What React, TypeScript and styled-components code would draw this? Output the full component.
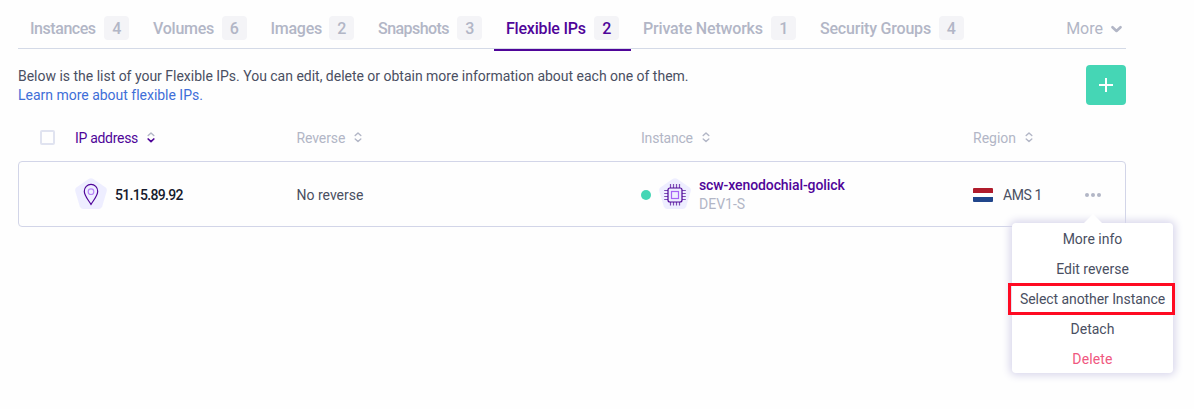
import React from "react";
import styled, { createGlobalStyle } from "styled-components";

const color = {
  purple: "#4f0599",
  grey: "#b2b6c6",
  text: "#4a4f62",
  line: "#d2d5e8",
  badge: "#f4f4f7",
  green: "#45d6b5",
  lilac: "#eeeeff",
};

const GlobalStyle = createGlobalStyle`
  * { box-sizing: border-box; }
  body {
    margin: 0;
    background: #fefefe;
    color: ${color.text};
    font: 400 14px/19px Roboto, sans-serif;
    white-space: nowrap;
  }
`;

const Page = styled.main`
  width: 1194px;
  height: 409px;
  padding: 8px 68px 0 18px;
  overflow: hidden;
`;

const TabBar = styled.nav`
  display: flex;
  height: 41px;
  border-bottom: 1px solid #d4dae7;
  font-size: 16px;
  font-weight: 500;
  color: ${color.grey};
`;

const Tab = styled.div<{ $width: number; $active?: boolean }>`
  display: flex;
  align-items: center;
  justify-content: space-between;
  width: ${(p) => p.$width}px;
  height: ${(p) => (p.$active ? 43 : 41)}px;
  padding: 0 12px 1px;
  color: ${(p) => (p.$active ? color.purple : "inherit")};
  border-bottom: ${(p) => (p.$active ? `2px solid ${color.purple}` : "0")};
`;

const Label = styled.span<{ $spacing?: number }>`
  letter-spacing: ${(p) => p.$spacing ?? 0}px;
`;

const Count = styled.span`
  width: 24.6px;
  height: 24px;
  border-radius: 4px;
  background: ${color.badge};
  line-height: 25px;
  text-align: center;
`;

const More = styled.div`
  display: flex;
  align-items: center;
  gap: 8px;
  margin-left: auto;
  padding: 1px 4px 0 0;
  font-weight: 400;
`;

const Intro = styled.section`
  display: flex;
  justify-content: space-between;
  height: 56px;
  padding-top: 16px;
`;

const IntroText = styled.p`
  margin: 2px 0 0;
  letter-spacing: -0.014px;
`;

const Link = styled.a`
  display: block;
  color: #3f6ed8;
`;

const AddButton = styled.button`
  display: grid;
  place-items: center;
  width: 40px;
  height: 40px;
  padding: 0;
  border: 0;
  border-radius: 4px;
  background: ${color.green};
`;

const Columns = styled.div`
  display: grid;
  grid-template-columns: 57px 221.5px 344.5px 332px 1fr;
  align-items: center;
`;

const HeadRow = styled(Columns)`
  height: 56px;
  padding-top: 10px;
`;

const HeadCell = styled.div<{ $active?: boolean }>`
  display: flex;
  align-items: center;
  gap: 9px;
  color: ${(p) => (p.$active ? color.purple : color.grey)};
`;

const Checkbox = styled.span`
  width: 15px;
  height: 15px;
  margin: -2px 0 0 21.6px;
  border: 2px solid #e0e3f0;
  border-radius: 2px;
`;

const Row = styled(Columns)`
  position: relative;
  height: 66px;
  border: 1px solid ${color.line};
  border-radius: 4px;
  grid-template-columns: 56px 221.5px 344.5px 332px 1fr;
`;

const Cell = styled.div`
  display: flex;
  align-items: center;
  line-height: 20px;
`;

const Address = styled.span`
  margin: 2px 0 0 8px;
  color: #151a2d;
  font-weight: 500;
  letter-spacing: -0.68px;
`;

const Reverse = styled.span`
  margin-top: 2px;
`;

const Status = styled.i`
  width: 10px;
  height: 10px;
  margin: 1px 8px 0 0;
  border-radius: 50%;
  background: ${color.green};
`;

const Server = styled.div`
  margin: 2px 0 0 8px;
  line-height: 19px;
  color: ${color.grey};
`;

const ServerName = styled.div`
  color: ${color.purple};
  font-weight: 500;
  letter-spacing: -0.1px;
`;

const Flag = styled.span`
  width: 20px;
  height: 14px;
  margin: 1px 10px 0 0;
  border-radius: 1px;
  background: linear-gradient(#b01c2c 0 4.6px, #fff 4.6px 9.4px, #21468b 9.4px);
`;

const Zone = styled.span`
  width: 38px;
  margin-top: 2px;
  letter-spacing: -0.4px;
`;

const Dots = styled.div`
  display: flex;
  gap: 2px;
  margin: 1px 0 0 44px;
`;

const Dot = styled.i`
  width: 4px;
  height: 4px;
  border-radius: 50%;
  background: ${color.grey};
`;

const Menu = styled.div`
  position: absolute;
  top: 61px;
  right: -48px;
  width: 161px;
  height: 150px;
  border-radius: 4px;
  background: #fff;
  box-shadow: 0 0 8px 2px #d5d3ea;
  &::before {
    content: "";
    position: absolute;
    top: -9px;
    left: 72px;
    border: 9px solid transparent;
    border-top: 0;
    border-bottom-color: #fff;
  }
`;

const MenuItem = styled.div<{ $danger?: boolean }>`
  height: 30px;
  line-height: 32px;
  text-align: center;
  color: ${(p) => (p.$danger ? "#f0587f" : color.text)};
`;

const Highlight = styled.div`
  position: absolute;
  top: 60px;
  left: -4px;
  width: 167px;
  height: 32px;
  border: 3px solid #ff0a22;
`;

function Sort({ active }: { active?: boolean }) {
  return (
    <svg width="8" height="12" viewBox="0 0 8 12" fill="none" stroke={color.grey} strokeWidth="1.4" strokeLinecap="round" strokeLinejoin="round">
      <path d="M1.2 3.5 4 .9 6.8 3.5" />
      <path d="M1.2 7 4 9.6 6.8 7" stroke={active ? color.purple : color.grey} strokeWidth={active ? 1.7 : 1.4} />
    </svg>
  );
}

function Pentagon({ children }: { children: React.ReactNode }) {
  return (
    <svg width="32" height="32" viewBox="0 0 32 32" fill="none">
      <path
        d="M13.6 1.1Q16 -.4 18.4 1.1L30.3 9.2Q32.4 10.8 31.7 13.3L27.2 28.6Q26.4 31 24 31H8Q5.6 31 4.8 28.6L.3 13.3Q-.4 10.8 1.7 9.2Z"
        fill={color.lilac}
      />
      {children}
    </svg>
  );
}

const tabs: [string, number, number, number][] = [
  ["Instances", 4, 123, -0.45],
  ["Volumes", 6, 117.5, -0.25],
  ["Images", 2, 107.5, -0.25],
  ["Snapshots", 3, 128, -0.55],
  ["Flexible IPs", 2, 137, -0.2],
  ["Private Networks", 1, 177, -0.18],
  ["Security Groups", 4, 167.5, -0.2],
];

const menu: [string, number][] = [
  ["More info", 0],
  ["Edit reverse", 0],
  ["Select another Instance", -0.07],
  ["Detach", 0],
  ["Delete", 0.15],
];

export default function App() {
  return (
    <Page>
      <GlobalStyle />
      <TabBar>
        {tabs.map(([name, count, width, spacing]) => (
          <Tab key={name} $width={width} $active={name === "Flexible IPs"}>
            <Label $spacing={spacing}>{name}</Label>
            <Count>{count}</Count>
          </Tab>
        ))}
        <More>
          More
          <svg width="11" height="8" viewBox="0 0 11 8" fill="none" stroke={color.grey} strokeWidth="2.6" strokeLinecap="round" strokeLinejoin="round">
            <path d="M1.5 2.2 5.5 6 9.5 2.2" />
          </svg>
        </More>
      </TabBar>
      <Intro>
        <IntroText>
          Below is the list of your Flexible IPs. You can edit, delete or obtain more information about each one of them.
          <Link>Learn more about flexible IPs.</Link>
        </IntroText>
        <AddButton aria-label="Add">
          <svg width="14" height="14" viewBox="0 0 14 14" stroke="#fff" strokeWidth="2">
            <path d="M7 0V14M0 7H14" />
          </svg>
        </AddButton>
      </Intro>
      <HeadRow>
        <Checkbox />
        <HeadCell $active><Label $spacing={-0.3}>IP address</Label><Sort active /></HeadCell>
        <HeadCell><Label $spacing={-0.1}>Reverse</Label><Sort /></HeadCell>
        <HeadCell><Label $spacing={-0.2}>Instance</Label><Sort /></HeadCell>
        <HeadCell><Label>Region</Label><Sort /></HeadCell>
      </HeadRow>
      <Row>
        <span />
        <Cell>
          <Pentagon>
            <path d="M16 26.4C13.6 22.2 9.3 18 9.3 13.3a6.7 6.9 0 0 1 13.4 0C22.7 18 18.4 22.2 16 26.4Z" stroke={color.purple} strokeWidth="1.2" />
            <circle cx="16" cy="13.7" r="2.8" stroke="#b884f7" strokeWidth="1.2" />
          </Pentagon>
          <Address>51.15.89.92</Address>
        </Cell>
        <Cell><Reverse>No reverse</Reverse></Cell>
        <Cell>
          <Status />
          <Pentagon>
            <path d="M11.5 6V10M14.5 6V10M17.5 6V10M20.5 6V10M11.5 24V27.5M14.5 24V27.5M17.5 24V27.5M20.5 24V27.5M5.2 12.5H9M5.2 15.5H9M5.2 18.5H9M5.2 21.5H9M23 12.5H26.8M23 15.5H26.8M23 18.5H26.8M23 21.5H26.8" stroke="#7d4cb5" strokeWidth="1.2" />
            <rect x="9" y="10" width="14" height="14" rx="2" stroke={color.purple} strokeWidth="1.2" />
            <rect x="12.5" y="13.5" width="7" height="7" stroke="#a764f5" strokeWidth="1.2" />
          </Pentagon>
          <Server>
            <ServerName>scw-xenodochial-golick</ServerName>
            DEV1-S
          </Server>
        </Cell>
        <Cell>
          <Flag />
          <Zone>AMS 1</Zone>
          <Dots><Dot /><Dot /><Dot /></Dots>
        </Cell>
        <Menu>
          {menu.map(([name, spacing]) => (
            <MenuItem key={name} $danger={name === "Delete"}>
              <Label $spacing={spacing}>{name}</Label>
            </MenuItem>
          ))}
          <Highlight />
        </Menu>
      </Row>
    </Page>
  );
}
